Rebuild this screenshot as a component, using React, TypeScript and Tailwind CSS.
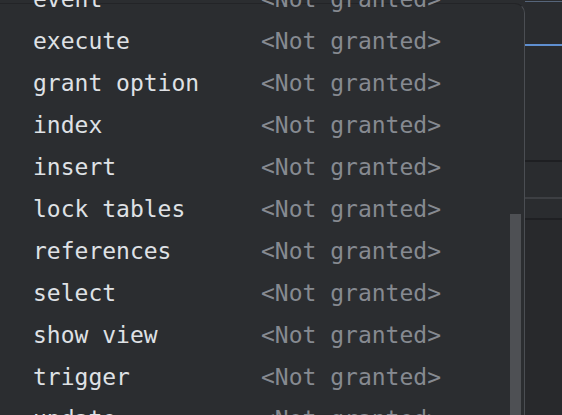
const privileges = [
  "event",
  "execute",
  "grant option",
  "index",
  "insert",
  "lock tables",
  "references",
  "select",
  "show view",
  "trigger",
  "update",
];

export default function App() {
  return (
    <div className="w-[562px] h-[415px] overflow-hidden bg-[#2b2d30] flex">
      {/* privileges popup */}
      <div className="relative mt-[3px] w-[525px] shrink-0 border-t border-r border-t-[#232427] border-r-[#4b4e53] rounded-tr-[10px] bg-[#2b2d30]">
        <div className="-mt-[26px] pl-[33px] font-['DejaVu_Sans_Mono',monospace] text-[23px] leading-[42px]">
          {privileges.map((p) => (
            <div key={p} className="flex h-[42px] whitespace-pre">
              <span className="w-[228px] shrink-0 text-[#dfe1e5]">{p}</span>
              <span className="text-[#868a91]">&lt;Not granted&gt;</span>
            </div>
          ))}
        </div>
        {/* scrollbar thumb */}
        <div className="absolute right-[3px] top-[210px] bottom-0 w-[11px] bg-[#4e5054]" />
      </div>

      {/* editor behind */}
      <div className="flex-1 flex flex-col bg-[#2a2c2f]">
        <div className="mt-[1px] h-[1px] bg-[#56657a]" />
        <div className="h-[42px]" />
        <div className="h-[2px] bg-[#5f8fd0]" />
        <div className="h-[114px]" />
        <div className="h-[2px] bg-[#1e1f22]" />
        <div className="h-[35px]" />
        <div className="h-[2px] bg-[#3d3f43]" />
        <div className="h-[19px]" />
        <div className="h-[2px] bg-[#1f2023]" />
        <div className="flex-1 bg-[#28292c]" />
      </div>
    </div>
  );
}
